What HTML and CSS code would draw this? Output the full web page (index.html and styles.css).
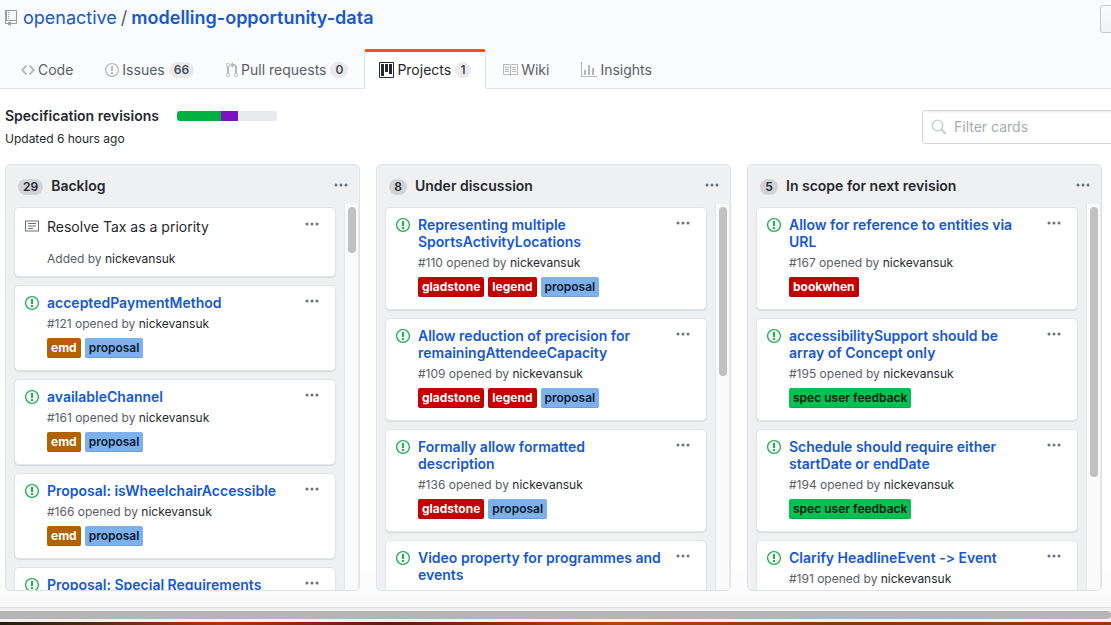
FILE: index.html
```html
<!DOCTYPE html>
<html lang="en">
<head>
<meta charset="utf-8">
<title>Specification revisions</title>
<link rel="stylesheet" href="styles.css">
</head>
<body>
<svg class="defs" aria-hidden="true">
  <symbol id="dots" viewBox="0 0 14 4"><path d="M2 .4a1.5 1.5 0 1 1 0 3 1.5 1.5 0 0 1 0-3zm5 0a1.5 1.5 0 1 1 0 3 1.5 1.5 0 0 1 0-3zm5 0a1.5 1.5 0 1 1 0 3 1.5 1.5 0 0 1 0-3z"/></symbol>
  <symbol id="issue" viewBox="0 0 14 16"><path fill-rule="evenodd" d="M7 2.3c3.14 0 5.7 2.56 5.7 5.7s-2.56 5.7-5.7 5.7A5.71 5.71 0 0 1 1.3 8c0-3.14 2.56-5.7 5.7-5.7zM7 1C3.14 1 0 4.14 0 8s3.14 7 7 7 7-3.14 7-7-3.14-7-7-7zm1 3H6v5h2V4zm0 6H6v2h2v-2z"/></symbol>
</svg>
<header class="header">
  <div class="header-top">
    <h1 class="repo">
      <svg class="repo-icon" width="12" height="16" viewBox="0 0 12 16"><path fill-rule="evenodd" d="M4 9H3V8h1v1zm0-3H3v1h1V6zm0-2H3v1h1V4zm0-2H3v1h1V2zm8-1v12c0 .55-.45 1-1 1H6v2l-1.5-1.500L3 16v-2H1c-.55 0-1-.45-1-1V1c0-.55.45-1 1-1h10c.55 0 1 .45 1 1zm-1 10H1v2h2v-1h3v1h5v-2zm0-10H2v9h9V1z"/></svg>
      <a class="owner" href="#">openactive</a><span class="slash">/</span><a class="name" href="#">modelling-opportunity-data</a>
    </h1>
    <button class="watch" type="button" aria-label="Watch"></button>
  </div>
  <nav class="tabs">
    <a class="tab" href="#"><svg width="14" height="16" viewBox="0 0 14 16"><path fill-rule="evenodd" d="M9.500 3L8 4.500 11.500 8 8 11.500 9.500 13 14 8 9.500 3zm-5 0L0 8l4.500 5L6 11.500 2.500 8 6 4.500 4.500 3z"/></svg>Code</a>
    <a class="tab" href="#"><svg width="14" height="16"><use href="#issue"/></svg>Issues <span class="count">66</span></a>
    <a class="tab" href="#"><svg width="12" height="16" viewBox="0 0 12 16"><path fill-rule="evenodd" d="M11 11.280V5c-.03-.78-.34-1.470-.94-2.060C9.460 2.350 8.780 2.030 8 2H7V0L4 3l3 3V4h1c.27.02.48.11.69.31.21.2.3.42.31.69v6.280A1.993 1.993 0 0 0 10 15a1.993 1.993 0 0 0 1-3.720zm-1 2.920c-.66 0-1.200-.55-1.200-1.200 0-.65.55-1.200 1.200-1.200.65 0 1.200.55 1.200 1.200 0 .65-.55 1.200-1.200 1.200zM4 3c0-1.110-.89-2-2-2a1.993 1.993 0 0 0-1 3.720v6.560A1.993 1.993 0 0 0 2 15a1.993 1.993 0 0 0 1-3.720V4.720c.59-.34 1-.98 1-1.720zm-.8 10c0 .66-.55 1.200-1.200 1.200-.65 0-1.200-.55-1.200-1.200 0-.65.55-1.200 1.200-1.200.65 0 1.200.55 1.200 1.200zM2 4.200C1.340 4.200.8 3.650.8 3c0-.65.55-1.200 1.200-1.200.65 0 1.200.55 1.200 1.200 0 .65-.55 1.200-1.200 1.200z"/></svg>Pull requests <span class="count">0</span></a>
    <a class="tab active" href="#" aria-current="page"><svg width="15" height="16" viewBox="0 0 15 16"><path fill-rule="evenodd" d="M10 12h3V2h-3v10zm-4-2h3V2H6v8zm-4 4h3V2H2v12zm-1 1h13V1H1v14zM14 0H1a1 1 0 0 0-1 1v14a1 1 0 0 0 1 1h13a1 1 0 0 0 1-1V1a1 1 0 0 0-1-1z"/></svg>Projects <span class="count">1</span></a>
    <a class="tab" href="#"><svg width="16" height="16" viewBox="0 0 16 16"><path fill-rule="evenodd" d="M3 5h4v1H3V5zm0 3h4V7H3v1zm0 2h4V9H3v1zm11-5h-4v1h4V5zm0 2h-4v1h4V7zm0 2h-4v1h4V9zm2-6v9c0 .55-.45 1-1 1H9.500l-1 1-1-1H2c-.55 0-1-.45-1-1V3c0-.55.45-1 1-1h5.500l1 1 1-1H15c.55 0 1 .45 1 1zm-8 .5L7.500 3H2v9h6V3.500zm7-.5H9.500l-.5.500V12h6V3z"/></svg>Wiki</a>
    <a class="tab" href="#"><svg width="16" height="16" viewBox="0 0 16 16"><path fill-rule="evenodd" d="M16 14v1H0V0h1v14h15zM5 13H3V8h2v5zm4 0H7V3h2v10zm4 0h-2V6h2v7z"/></svg>Insights</a>
  </nav>
</header>

<section class="project">
  <div class="project-info">
    <div class="project-title"><h2>Specification revisions</h2><div class="progress"><span class="done"></span><span class="doing"></span></div></div>
    <p class="updated">Updated 6 hours ago</p>
  </div>
  <label class="filter">
    <svg width="16" height="16" viewBox="0 0 16 16"><path fill="none" stroke="currentColor" stroke-width="1.300" d="M6.500 1.200a5.300 5.300 0 1 1 0 10.600 5.300 5.300 0 0 1 0-10.600z"/><path fill="none" stroke="currentColor" stroke-width="2" stroke-linecap="round" d="M10.700 10.700l3.600 3.600"/></svg>
    <input type="text" placeholder="Filter cards" aria-label="Filter cards">
  </label>
</section>

<main class="board">
  <section class="column">
    <div class="column-head"><span class="badge">29</span><h3>Backlog</h3><button class="more" type="button" aria-label="Column menu"><svg width="14" height="4"><use href="#dots"/></svg></button></div>
    <div class="column-body">
      <div class="cards">
        <article class="card note">
          <svg class="card-icon" width="14" height="16" viewBox="0 0 14 16"><path fill-rule="evenodd" d="M0 2.500h14v11H0v-11zm1 1v9h12v-9H1zM3 5h8v1H3V5zm0 2.500h8v1H3v-1zM3 10h5v1H3v-1z"/></svg>
          <div class="card-text"><p class="note-text">Resolve Tax as a priority</p><p class="meta">Added by <a href="#">nickevansuk</a></p></div>
          <button class="more" type="button" aria-label="Card menu"><svg width="14" height="4"><use href="#dots"/></svg></button>
        </article>
        <article class="card">
          <svg class="card-icon open" width="14" height="16"><use href="#issue"/></svg>
          <div class="card-text"><a class="title" href="#">acceptedPaymentMethod</a><p class="meta">#121 opened by <a href="#">nickevansuk</a></p><div class="labels"><span class="label brown">emd</span><span class="label blue">proposal</span></div></div>
          <button class="more" type="button" aria-label="Card menu"><svg width="14" height="4"><use href="#dots"/></svg></button>
        </article>
        <article class="card">
          <svg class="card-icon open" width="14" height="16"><use href="#issue"/></svg>
          <div class="card-text"><a class="title" href="#">availableChannel</a><p class="meta">#161 opened by <a href="#">nickevansuk</a></p><div class="labels"><span class="label brown">emd</span><span class="label blue">proposal</span></div></div>
          <button class="more" type="button" aria-label="Card menu"><svg width="14" height="4"><use href="#dots"/></svg></button>
        </article>
        <article class="card">
          <svg class="card-icon open" width="14" height="16"><use href="#issue"/></svg>
          <div class="card-text"><a class="title" href="#">Proposal: isWheelchairAccessible</a><p class="meta">#166 opened by <a href="#">nickevansuk</a></p><div class="labels"><span class="label brown">emd</span><span class="label blue">proposal</span></div></div>
          <button class="more" type="button" aria-label="Card menu"><svg width="14" height="4"><use href="#dots"/></svg></button>
        </article>
        <article class="card">
          <svg class="card-icon open" width="14" height="16"><use href="#issue"/></svg>
          <div class="card-text"><a class="title" href="#">Proposal: Special Requirements</a></div>
          <button class="more" type="button" aria-label="Card menu"><svg width="14" height="4"><use href="#dots"/></svg></button>
        </article>
      </div>
      <div class="track"><div class="thumb short"></div></div>
    </div>
  </section>

  <section class="column">
    <div class="column-head"><span class="badge">8</span><h3>Under discussion</h3><button class="more" type="button" aria-label="Column menu"><svg width="14" height="4"><use href="#dots"/></svg></button></div>
    <div class="column-body">
      <div class="cards">
        <article class="card">
          <svg class="card-icon open" width="14" height="16"><use href="#issue"/></svg>
          <div class="card-text"><a class="title" href="#">Representing multiple SportsActivityLocations</a><p class="meta">#110 opened by <a href="#">nickevansuk</a></p><div class="labels"><span class="label red">gladstone</span><span class="label red">legend</span><span class="label blue">proposal</span></div></div>
          <button class="more" type="button" aria-label="Card menu"><svg width="14" height="4"><use href="#dots"/></svg></button>
        </article>
        <article class="card">
          <svg class="card-icon open" width="14" height="16"><use href="#issue"/></svg>
          <div class="card-text"><a class="title" href="#">Allow reduction of precision for remainingAttendeeCapacity</a><p class="meta">#109 opened by <a href="#">nickevansuk</a></p><div class="labels"><span class="label red">gladstone</span><span class="label red">legend</span><span class="label blue">proposal</span></div></div>
          <button class="more" type="button" aria-label="Card menu"><svg width="14" height="4"><use href="#dots"/></svg></button>
        </article>
        <article class="card">
          <svg class="card-icon open" width="14" height="16"><use href="#issue"/></svg>
          <div class="card-text"><a class="title" href="#">Formally allow formatted description</a><p class="meta">#136 opened by <a href="#">nickevansuk</a></p><div class="labels"><span class="label red">gladstone</span><span class="label blue">proposal</span></div></div>
          <button class="more" type="button" aria-label="Card menu"><svg width="14" height="4"><use href="#dots"/></svg></button>
        </article>
        <article class="card">
          <svg class="card-icon open" width="14" height="16"><use href="#issue"/></svg>
          <div class="card-text"><a class="title" href="#">Video property for programmes and events</a><p class="meta">#88 opened by <a href="#">nickevansuk</a></p></div>
          <button class="more" type="button" aria-label="Card menu"><svg width="14" height="4"><use href="#dots"/></svg></button>
        </article>
      </div>
      <div class="track"><div class="thumb medium"></div></div>
    </div>
  </section>

  <section class="column">
    <div class="column-head"><span class="badge">5</span><h3>In scope for next revision</h3><button class="more" type="button" aria-label="Column menu"><svg width="14" height="4"><use href="#dots"/></svg></button></div>
    <div class="column-body">
      <div class="cards">
        <article class="card">
          <svg class="card-icon open" width="14" height="16"><use href="#issue"/></svg>
          <div class="card-text"><a class="title" href="#">Allow for reference to entities via URL</a><p class="meta">#167 opened by <a href="#">nickevansuk</a></p><div class="labels"><span class="label red">bookwhen</span></div></div>
          <button class="more" type="button" aria-label="Card menu"><svg width="14" height="4"><use href="#dots"/></svg></button>
        </article>
        <article class="card">
          <svg class="card-icon open" width="14" height="16"><use href="#issue"/></svg>
          <div class="card-text"><a class="title" href="#">accessibilitySupport should be array of Concept only</a><p class="meta">#195 opened by <a href="#">nickevansuk</a></p><div class="labels"><span class="label green">spec user feedback</span></div></div>
          <button class="more" type="button" aria-label="Card menu"><svg width="14" height="4"><use href="#dots"/></svg></button>
        </article>
        <article class="card">
          <svg class="card-icon open" width="14" height="16"><use href="#issue"/></svg>
          <div class="card-text"><a class="title" href="#">Schedule should require either startDate or endDate</a><p class="meta">#194 opened by <a href="#">nickevansuk</a></p><div class="labels"><span class="label green">spec user feedback</span></div></div>
          <button class="more" type="button" aria-label="Card menu"><svg width="14" height="4"><use href="#dots"/></svg></button>
        </article>
        <article class="card">
          <svg class="card-icon open" width="14" height="16"><use href="#issue"/></svg>
          <div class="card-text"><a class="title" href="#">Clarify HeadlineEvent -&gt; Event</a><p class="meta">#191 opened by <a href="#">nickevansuk</a></p></div>
          <button class="more" type="button" aria-label="Card menu"><svg width="14" height="4"><use href="#dots"/></svg></button>
        </article>
      </div>
      <div class="track"><div class="thumb long"></div></div>
    </div>
  </section>
</main>
<div class="page-scroll"><div class="page-thumb"></div></div>
<div class="desktop-edge"></div>
</body>
</html>
```

FILE: styles.css
```css
* { box-sizing: border-box; }
body {
  margin: 0;
  height: 100vh;
  display: flex;
  flex-direction: column;
  overflow: hidden;
  background: #fff;
  color: #24292e;
  font-family: Inter, "Liberation Sans", sans-serif;
  font-size: 14px;
  font-variant-ligatures: none;
}
h1, h2, h3, p { margin: 0; }
a { color: inherit; text-decoration: none; }
button { font: inherit; border: 0; background: none; padding: 0; }
svg { fill: currentColor; flex: none; }
.defs { position: absolute; width: 0; height: 0; }

.header { background: #fafbfc; border-bottom: 1px solid #e1e4e8; }
.header-top { display: flex; justify-content: space-between; height: 49px; padding: 5px 0 0 5px; overflow: hidden; }
.repo { display: flex; align-items: center; height: 24px; font-size: 18px; font-weight: 400; white-space: nowrap; }
.repo-icon { margin: 2px 6px 0 0; color: #959da5; }
.owner, .name { color: #1558d6; }
.name { font-weight: 600; }
.slash { margin: 0 4px; color: #586069; }
.watch {
  width: 80px; height: 28px; margin-right: -69px;
  border: 1px solid #c5c9cd; border-radius: 3px;
  background: linear-gradient(#fafbfc, #eff3f6);
}

.tabs { display: flex; padding-left: 5px; margin-bottom: -1px; }
.tab {
  display: flex; align-items: center; height: 40px; padding: 1px 15px 0;
  border: solid transparent; border-width: 0 1px;
  color: #586069; white-space: nowrap;
}
.tab svg { margin-right: 3px; color: #b5b9bd; }
.tab.active {
  background: #fff; color: #24292e; padding: 0 14px 2px;
  border-color: #e1e4e8; border-top: 3px solid #f9510b; border-radius: 3px 3px 0 0;
}
.tab.active svg { color: #24292e; }
.count {
  min-width: 16px; margin-left: 4px; padding: 0 5px; border-radius: 20px;
  background: #e9eaec; color: #444d56;
  font-size: 12px; font-weight: 600; line-height: 16px; text-align: center;
}

.project { display: flex; justify-content: space-between; align-items: flex-start; height: 75px; padding: 17px 0 0 5px; overflow: hidden; }
.project-title { display: flex; align-items: center; gap: 18px; height: 20px; }
.project h2 { padding-bottom: 2px; font-size: 14px; font-weight: 600; }
.progress { display: flex; width: 100px; height: 10px; border-radius: 3px; overflow: hidden; background: #e9eaee; }
.done { width: 44%; background: #00b140; }
.doing { width: 17%; background: #7d12c4; }
.updated { margin-top: 4px; font-size: 12px; line-height: 18px; }
.filter {
  display: flex; align-items: center; width: 320px; height: 34px; margin: 4px -131px 0 0; padding-left: 8px;
  border: 1px solid #d1d5da; border-radius: 3px; color: #c6cbd1;
  box-shadow: inset 0 1px 2px rgba(27, 31, 35, .075);
}
.filter input { flex: 1; min-width: 0; border: 0; padding: 0 7px 2px; background: none; font: inherit; }
.filter input::placeholder { color: #a8adb3; opacity: 1; }

.board { flex: 1; min-height: 0; display: flex; gap: 16px; padding: 0 9px 16px 5px; background: linear-gradient(#fff 90%, #f8f8f8); }
.column {
  flex: 1 1 0; min-width: 0; display: flex; flex-direction: column; overflow: hidden;
  border: 1px solid #dfe2e6; border-radius: 5px; background: #eff0f2;
}
.column-head { display: flex; align-items: center; height: 39px; padding: 4px 11px 0 12px; }
.column-head h3 { flex: 1; padding-bottom: 2px; font-size: 14px; font-weight: 600; }
.column-head .more { margin-bottom: 4px; }
.badge {
  min-width: 18px; margin-right: 8px; padding: 0 5px; border-radius: 20px;
  background: #d1d3d6; font-size: 12px; font-weight: 600; line-height: 16px; text-align: center;
}
.more { display: flex; align-items: center; height: 10px; color: #6a737d; }
.column-body { flex: 1; min-height: 0; display: flex; }
.cards { flex: 1; min-width: 0; display: flex; flex-direction: column; gap: 8px; padding: 3px 8px 0; overflow: hidden; }
.card {
  flex: none; display: flex; align-items: flex-start; padding: 8px 16px 12px 10px;
  border: 1px solid #e1e4e8; border-radius: 5px; background: #fff;
  box-shadow: 0 1px 1px rgba(27, 31, 35, .1);
}
.card .more { margin-top: 2px; }
.card-icon { margin: 1px 8px 0 0; color: #6a737d; }
.card-icon.open { color: #1bb14c; }
.card-text { flex: 1; min-width: 0; padding-right: 13px; }
.title { display: block; color: #1558d6; font-weight: 600; line-height: 17px; }
.note-text { line-height: 20px; }
.meta { margin-top: 3px; color: #586069; font-size: 12px; line-height: 19px; }
.meta a { color: #24292e; }
.note { padding-top: 9px; padding-bottom: 8px; }
.note .meta { margin-top: 12px; }
.labels { display: flex; gap: 4px; margin-top: 5px; }
.label { padding: 0 4px; border-radius: 2px; font-size: 12px; font-weight: 600; line-height: 20px; box-shadow: inset 0 -1px rgba(27, 31, 35, .12); }
.brown { background: #b36200; color: #fff; font-weight: 700; }
.blue { background: #7db1ee; color: #091a2e; }
.red { background: #c60000; color: #fff; font-weight: 700; }
.green { background: #00c151; color: #04200f; }

.track { flex: none; width: 15px; padding: 3px; background: #fafafa; border: solid #e8e8e8; border-width: 0 1px; }
.thumb { width: 8px; border-radius: 4px; background: #c1c1c1; }
.short { height: 46px; }
.medium { height: 169px; }
.long { height: 270px; }

.page-scroll { flex: none; height: 15px; padding: 3px 0; background: #f1f1f1; border-top: 1px solid #dedede; }
.page-thumb { height: 8px; background: #b5b5b5; border-radius: 0 4px 4px 0; }
.desktop-edge { flex: none; height: 3px; background: linear-gradient(90deg, #241d0c, #9c3c16 20%, #5c1c0c 35%, #a44a10 55%, #7a3d10 75%, #8c3c10); }
```
